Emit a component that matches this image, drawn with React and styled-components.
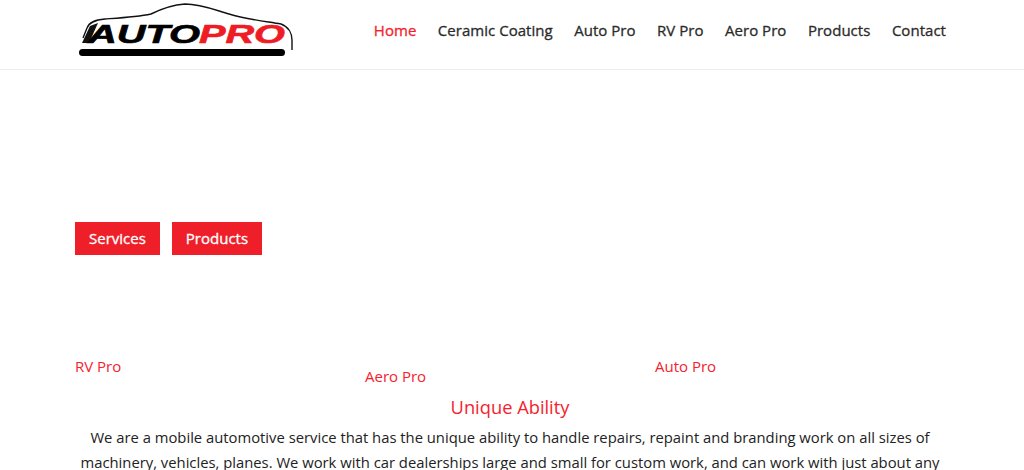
import React from 'react'
import styled, { createGlobalStyle } from 'styled-components'

const GlobalStyle = createGlobalStyle`
  html, body {
    margin: 0;
    padding: 0;
    height: 470px;
    overflow: hidden;
    background: #fff;
    font-family: "Open Sans", "Liberation Sans", sans-serif;
  }
`;

const Header = styled.header`
  height: 69px;
  border-bottom: 1px solid #ededed;
  padding: 0 78px 0 79px;
  display: flex;
  align-items: flex-start;
  justify-content: space-between;
`;

const Logo = styled.svg`
  width: 217px;
  height: 60px;
  display: block;
`;

const Nav = styled.nav`
  display: flex;
  gap: 21.5px;
  padding-top: 19.5px;
`;

const NavLink = styled.a`
  font-size: 15px;
  line-height: 20px;
  font-weight: 400;
  letter-spacing: 0.03px;
  -webkit-text-stroke: 0.3px currentColor;
  color: ${props => (props.$active ? '#f5222d' : '#2b2b2b')};
`;

const Main = styled.main`
  padding: 0 79px 0 75px;
`;

const Actions = styled.div`
  display: flex;
  gap: 12px;
  padding-top: 152px;
`;

const ActionButton = styled.a`
  height: 33px;
  padding: 0 14px 1px;
  display: flex;
  align-items: center;
  box-sizing: border-box;
  background: #ef1f2a;
  color: #fff;
  font-size: 15px;
  font-weight: 400;
  -webkit-text-stroke: 0.3px currentColor;
`;

const Columns = styled.div`
  display: grid;
  grid-template-columns: repeat(3, 290px);
  padding-top: 101px;
  height: 32px;
`;

const ColumnLabel = styled.a`
  font-size: 15px;
  line-height: 20px;
  color: #f5222d;
  margin-top: ${props => props.$offset || 0}px;
`;

const Title = styled.h2`
  margin: 6px 0 0;
  font-size: 18.3px;
  line-height: 26px;
  font-weight: 400;
  text-align: center;
  color: #f5222d;
`;

const Body = styled.p`
  margin: 5px 0 0;
  font-size: 14.8px;
  line-height: 25px;
  text-align: center;
  color: #222;
`;

function AutoProLogo() {
  return (
    <Logo viewBox="0 0 217 60">
      <path
        d="M4 38 L8 28 C10 22 16 20 26 19 C40 18 58 17 72 14 C82 9 92 5 106 4 C122 4 136 10 150 14 C166 19 184 21 202 24 C210 27 213 34 213 40 L213 50"
        fill="none"
        stroke="#111"
        strokeWidth="1.4"
      />
      <path d="M3 43 L11 26 L19 23 L10 43 Z" fill="#111" />
      <rect x="0" y="49" width="206" height="7" rx="3.5" fill="#000" />
      <text
        x="9"
        y="43"
        fontFamily="Liberation Sans, sans-serif"
        fontSize="25"
        fontWeight="700"
        fontStyle="italic"
        stroke="#000"
        strokeWidth="0.6"
        textLength="112"
        lengthAdjust="spacingAndGlyphs"
        fill="#000"
      >
        AUTO
      </text>
      <text
        x="120"
        y="43"
        fontFamily="Liberation Sans, sans-serif"
        fontSize="25"
        fontWeight="700"
        fontStyle="italic"
        stroke="#ee1c25"
        strokeWidth="0.6"
        textLength="86"
        lengthAdjust="spacingAndGlyphs"
        fill="#ee1c25"
      >
        PRO
      </text>
    </Logo>
  );
}

function App() {
  return (
    <>
      <GlobalStyle />
      <Header>
        <AutoProLogo />
        <Nav>
          <NavLink $active>Home</NavLink>
          <NavLink>Ceramic Coating</NavLink>
          <NavLink>Auto Pro</NavLink>
          <NavLink>RV Pro</NavLink>
          <NavLink>Aero Pro</NavLink>
          <NavLink>Products</NavLink>
          <NavLink>Contact</NavLink>
        </Nav>
      </Header>
      <Main>
        <Actions>
          <ActionButton>Services</ActionButton>
          <ActionButton>Products</ActionButton>
        </Actions>
        <Columns>
          <ColumnLabel>RV Pro</ColumnLabel>
          <ColumnLabel $offset={10}>Aero Pro</ColumnLabel>
          <ColumnLabel>Auto Pro</ColumnLabel>
        </Columns>
        <Title>Unique Ability</Title>
        <Body>
          We are a mobile automotive service that has the unique ability to handle repairs, repaint and branding work on all sizes of
          machinery, vehicles, planes. We work with car dealerships large and small for custom work, and can work with just about any
        </Body>
      </Main>
    </>
  );
}

export default App
